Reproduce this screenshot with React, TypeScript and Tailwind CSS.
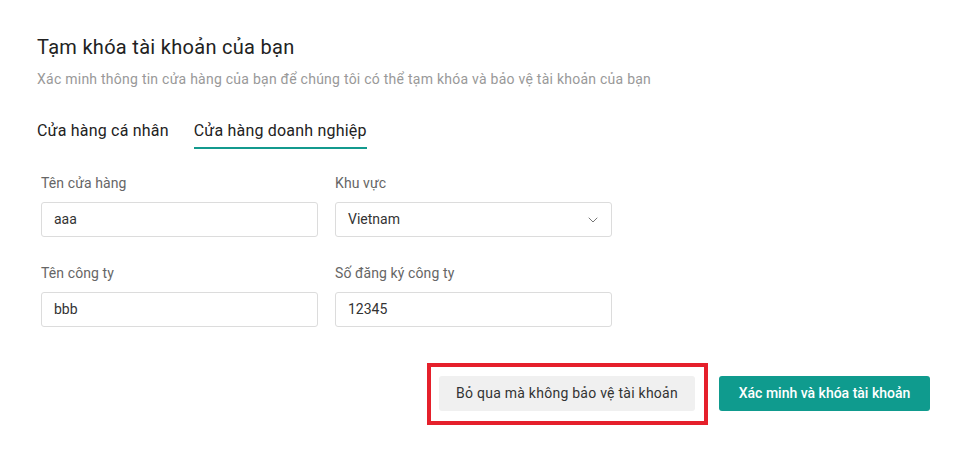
import React from 'react';
import { ChevronDown } from 'lucide-react';

const font = { fontFamily: 'Roboto, "Noto Sans", Arial, sans-serif' };

interface FieldProps {
  label: string;
  value: string;
  select?: boolean;
}

const Field: React.FC<FieldProps> = ({ label, value, select = false }) => (
  <div className="flex flex-col">
    <label className="text-[14px] leading-[18px] tracking-[0.1px] text-[#666] mb-[10px]">{label}</label>
    <div className="h-[35px] rounded-[3px] border border-[#dcdcdc] bg-white flex items-center justify-between pl-[12px] pr-[10px]">
      <span className="text-[14px] text-[#333]">{value}</span>
      {select && <ChevronDown className="w-[16px] h-[16px] text-[#777]" strokeWidth={1.5} />}
    </div>
  </div>
);

export default function App() {
  return (
    <div className="w-[972px] h-[452px] bg-white pl-[37px] pt-[34px] pr-[42px]" style={font}>
      {/* Header */}
      <h1 className="text-[20px] leading-[26px] tracking-[0.3px] text-[#222] font-normal">Tạm khóa tài khoản của bạn</h1>
      <p className="mt-[10px] text-[14px] leading-[18px] tracking-[0.25px] text-[#999]">
        Xác minh thông tin cửa hàng của bạn để chúng tôi có thể tạm khóa và bảo vệ tài khoản của bạn
      </p>

      {/* Tabs */}
      <div className="mt-[33px] flex gap-[25px] text-[16px] leading-[20px] tracking-[0.2px] text-[#222]">
        <div className="pb-[6px] border-b-2 border-transparent">Cửa hàng cá nhân</div>
        <div className="pb-[6px] border-b-2 border-[#139a8e]">Cửa hàng doanh nghiệp</div>
      </div>

      {/* Form */}
      <div className="mt-[25px] ml-[4px] w-[571px] grid grid-cols-2 gap-x-[17px] gap-y-[27px]">
        <Field label="Tên cửa hàng" value="aaa" />
        <Field label="Khu vực" value="Vietnam" select />
        <Field label="Tên công ty" value="bbb" />
        <Field label="Số đăng ký công ty" value="12345" />
      </div>

      {/* Actions */}
      <div className="mt-[49px] flex justify-end items-center gap-[24px]">
        <div className="relative">
          <button className="h-[35px] w-[256px] rounded-[3px] bg-[#f0f0f0] text-[14px] tracking-[0.25px] text-[#333]">
            Bỏ qua mà không bảo vệ tài khoản
          </button>
          <div className="absolute -left-[12px] -right-[13px] -top-[13px] -bottom-[14px] border-[4px] border-[#e5202b] pointer-events-none" />
        </div>
        <button className="h-[35px] w-[211px] rounded-[3px] bg-[#0f9b8e] text-[14px] font-medium text-white">
          Xác minh và khóa tài khoản
        </button>
      </div>
    </div>
  );
}
